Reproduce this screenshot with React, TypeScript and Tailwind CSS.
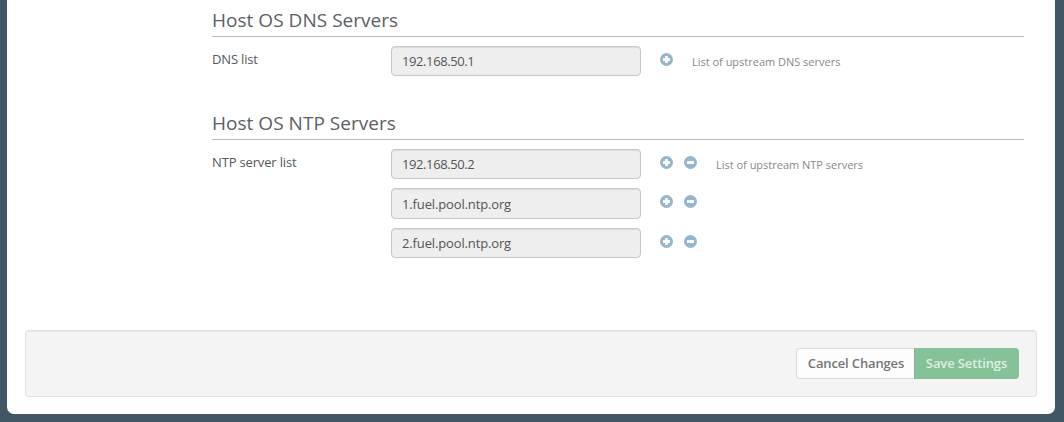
import React from "react";

function Glyph({ plus }: { plus?: boolean }) {
  return (
    <svg width="13" height="13" viewBox="0 0 13 13" className="block shrink-0">
      <circle cx="6.5" cy="6.5" r="6.5" fill="#94b6cf" />
      <rect x="3" y="5.1" width="7" height="2.8" rx="0.4" fill="#fff" />
      {plus && <rect x="5.1" y="3" width="2.8" height="7" rx="0.4" fill="#fff" />}
    </svg>
  );
}

function Field({ value, minus, hint, tall, numeric }: { value: string; minus?: boolean; hint?: string; tall?: boolean; numeric?: boolean }) {
  return (
    <div className={tall ? "flex h-[31px]" : "flex h-[30px]"}>
      <div className="h-full w-[250px] rounded-[4px] border border-[#c8c8c8] bg-[#eee] pl-[10px] shadow-[inset_0_1px_1px_rgba(0,0,0,0.075)]">
        <div
          className={`text-[13px] leading-[18px] text-[#555] ${tall ? "pt-[6px]" : "pt-[5px]"} ${numeric ? "tracking-[-0.4px]" : "tracking-[-0.14px]"}`}
        >
          {value}
        </div>
      </div>
      <div className="ml-[19px] mt-[7px] flex gap-[11px]">
        <Glyph plus />
        {minus && <Glyph />}
      </div>
      {hint && <div className="ml-[19px] pt-[8px] text-[11px] leading-[16px] tracking-[-0.01px] text-[#888]">{hint}</div>}
    </div>
  );
}

function Section({ title, label, children }: { title: string; label: string; children: React.ReactNode }) {
  return (
    <section className="w-[812px]">
      <h3 className="h-[37px] border-b border-[#b8bbbd] pt-[7px] text-[19px] leading-[26px] tracking-[0.03px] text-[#5a6066]">{title}</h3>
      <div className="flex pt-[9px]">
        <div className="w-[179px] pt-[4px] text-[13px] leading-[18px] tracking-[-0.16px] text-[#535960]">{label}</div>
        <div className="flex flex-col">{children}</div>
      </div>
    </section>
  );
}

export default function App() {
  return (
    <div className="h-[422px] w-[1064px] overflow-hidden bg-[#415766] pl-[7px] pr-[9px] font-['Open_Sans',sans-serif]">
      <main className="flex h-[414px] flex-col rounded-b-[7px] bg-white px-[18px]">
        <div className="flex h-[330px] flex-col pl-[187px]">
          <Section title="Host OS DNS Servers" label="DNS list">
            <Field value="192.168.50.1" numeric hint="List of upstream DNS servers" />
          </Section>
          <div className="h-[27px]" />
          <Section title="Host OS NTP Servers" label="NTP server list">
            <Field value="192.168.50.2" numeric minus hint="List of upstream NTP servers" />
            <div className="h-[9px]" />
            <Field value="1.fuel.pool.ntp.org" minus tall />
            <div className="h-[9px]" />
            <Field value="2.fuel.pool.ntp.org" minus />
          </Section>
        </div>
        <div className="flex h-[67px] items-start justify-end rounded-[3px] border border-[#e2e2e2] bg-[#f4f4f4] pr-[17px] pt-[17px] shadow-[inset_0_1px_1px_rgba(0,0,0,0.05)]">
          <button className="h-[31px] w-[118px] rounded-l-[4px] border border-r-0 border-[#d9d9d9] bg-[#fdfdfd] pl-[1px] text-[13px] font-semibold tracking-[-0.14px] text-[#757575]">Cancel Changes</button>
          <button className="h-[31px] w-[105px] rounded-r-[4px] border border-[#86c298] border-l-[#7abb8d] bg-[#86c298] text-[13px] font-semibold tracking-[-0.12px] text-[#dfeee3]">Save Settings</button>
        </div>
      </main>
    </div>
  );
}
